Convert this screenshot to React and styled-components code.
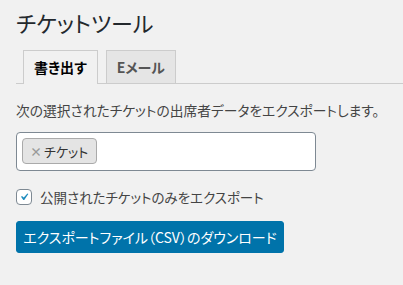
import React from 'react';
import styled, { createGlobalStyle } from 'styled-components';

const GlobalStyle = createGlobalStyle`
  body {
    margin: 0;
    background: #f1f1f1;
    font-family: "Noto Sans CJK JP", "Noto Sans", sans-serif;
    font-feature-settings: "palt";
    color: #444;
  }
`;

const Page = styled.div`
  padding: 0 0 0 16px;
  height: 285px;
  box-sizing: border-box;
`;

const Title = styled.h1`
  margin: 0;
  padding-top: 7px;
  font-size: 22px;
  line-height: 30px;
  font-weight: 400;
  color: #23282d;
`;

const TabBar = styled.div`
  display: flex;
  margin-top: 13px;
  padding-left: 7px;
  border-bottom: 1px solid #ccc;
  gap: 8px;
`;

const Tab = styled.div`
  padding: 4px 10px;
  line-height: 24px;
  font-size: 14px;
  font-weight: ${p => (p.$active ? 700 : 600)};
  border: 1px solid #ccc;
  border-bottom: none;
  background: ${p => (p.$active ? '#f1f1f1' : '#e5e5e5')};
  color: ${p => (p.$active ? '#000' : '#555')};
  margin-bottom: ${p => (p.$active ? '-1px' : '0')};
  padding-bottom: ${p => (p.$active ? '5px' : '4px')};
`;

const Description = styled.p`
  margin: 16px 0 0;
  font-size: 13.75px;
  line-height: 20px;
`;

const TagBox = styled.div`
  margin-top: 12px;
  width: 300px;
  height: 39px;
  box-sizing: border-box;
  background: #fff;
  border: 1px solid #7e8993;
  border-radius: 4px;
  padding: 5px;
  display: flex;
  align-items: flex-start;
`;

const Tag = styled.span`
  display: flex;
  align-items: center;
  height: 26px;
  box-sizing: border-box;
  padding: 0 8px 0 7px;
  background: #e4e4e4;
  border: 1px solid #aaa;
  border-radius: 4px;
  font-size: 13px;
  color: #333;
`;

const Remove = styled.span`
  color: #999;
  font-weight: 700;
  font-size: 12px;
  margin-right: 2px;
`;

const CheckRow = styled.label`
  display: flex;
  align-items: center;
  margin-top: 18px;
  gap: 8px;
  font-size: 13.5px;
  line-height: 16px;
`;

const Box = styled.span`
  width: 16px;
  height: 16px;
  box-sizing: border-box;
  border: 1px solid #7e8993;
  border-radius: 4px;
  background: #fff;
  display: flex;
  align-items: center;
  justify-content: center;
`;

const Button = styled.button`
  margin-top: 16px;
  width: 268px;
  height: 32px;
  border: 1px solid #0073aa;
  border-radius: 3px;
  background: #0073aa;
  color: #fff;
  font-family: inherit;
  font-feature-settings: "palt";
  font-size: 14px;
  white-space: nowrap;
  padding: 0;
  cursor: pointer;
`;

export default function App() {
  return (
    <>
      <GlobalStyle />
      <Page>
        <Title>チケットツール</Title>
        <TabBar>
          <Tab $active>書き出す</Tab>
          <Tab>Eメール</Tab>
        </TabBar>
        <Description>次の選択されたチケットの出席者データをエクスポートします。</Description>
        <TagBox>
          <Tag>
            <Remove>×</Remove>チケット
          </Tag>
        </TagBox>
        <CheckRow>
          <Box>
            <svg width="14" height="14" viewBox="0 0 20 20">
              <path d="M14.83 4.89l1.34.94-5.81 8.38H9.02L5.78 9.67l1.34-1.25 2.57 2.4z" fill="#1e8cbe" />
            </svg>
          </Box>
          公開されたチケットのみをエクスポート
        </CheckRow>
        <Button>エクスポートファイル（CSV）のダウンロード</Button>
      </Page>
    </>
  );
}
